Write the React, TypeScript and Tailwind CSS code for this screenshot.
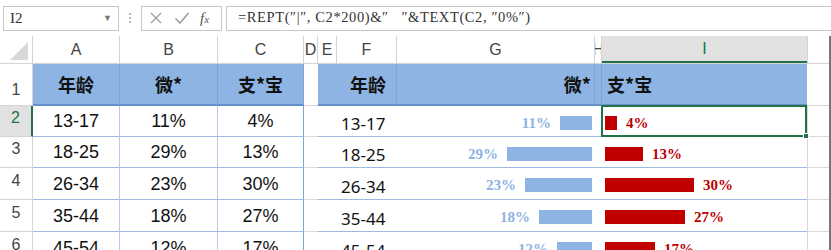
import React from 'react';

const rows = [
    { age: '13-17', w: 11, z: 4, h: 31 },
    { age: '18-25', w: 29, z: 13, h: 31 },
    { age: '26-34', w: 23, z: 30, h: 32 },
    { age: '35-44', w: 18, z: 27, h: 32 },
    { age: '45-54', w: 12, z: 17, h: 32 },
];

const sans = { fontFamily: '"Liberation Sans", Arial, sans-serif' };

const FormulaBar = () => (
    <div className="flex h-[36px] items-center bg-white pl-[3px]">
        <div className="flex h-[25px] w-[116px] items-center justify-between border border-[#c6c6c6] pl-[6px] pr-[6px]">
            <span className="text-[15px] text-[#333] font-['Liberation_Serif',serif]">I2</span>
            <span className="text-[9px] text-[#777]">▼</span>
        </div>
        <div className="flex w-[22px] flex-col items-center gap-[2px]">
            <span className="h-[2px] w-[2px] bg-[#bbb]" />
            <span className="h-[2px] w-[2px] bg-[#bbb]" />
            <span className="h-[2px] w-[2px] bg-[#bbb]" />
        </div>
        <div className="flex h-[25px] w-[81px] items-center border border-[#c6c6c6] pl-[6px]">
            <svg width="14" height="14" viewBox="0 0 14 14" className="ml-[1px]">
                <path d="M2 2 L12 12 M12 2 L2 12" stroke="#a0a0a0" strokeWidth="1.4" />
            </svg>
            <svg width="16" height="14" viewBox="0 0 16 14" className="ml-[11px]">
                <path d="M1.5 7.5 L6 12 L14.5 2" stroke="#a0a0a0" strokeWidth="1.6" fill="none" />
            </svg>
            <span className="ml-[10px] text-[15px] italic text-[#555] font-['Liberation_Serif',serif]">
                f<span className="text-[11px]">x</span>
            </span>
        </div>
        <div className="ml-[4px] flex h-[25px] flex-1 items-center border border-r-0 border-[#c6c6c6] pl-[11px]">
            <span className="text-[14.5px] tracking-[0.6px] text-[#333] font-['Liberation_Serif','Noto_Sans_CJK_SC',serif]">
                =REPT(″|″, C2*200)&amp;″&nbsp;&nbsp;&nbsp;″&amp;TEXT(C2, ″0%″)
            </span>
        </div>
    </div>
);

const colHeads = [
    { l: 'A', w: 87 },
    { l: 'B', w: 98 },
    { l: 'C', w: 86 },
    { l: 'D', w: 14 },
    { l: 'E', w: 19 },
    { l: 'F', w: 60 },
    { l: 'G', w: 198 },
    { l: 'H', w: 7 },
];

const ColumnHeader = () => (
    <div className="flex h-[28px] border-b border-[#d4d4d4] bg-white text-[16px] text-[#444]" style={sans}>
        <div className="relative w-[33px] border-r border-[#d4d4d4]">
            <svg width="20" height="20" viewBox="0 0 20 20" className="absolute bottom-[2px] right-[3px]">
                <path d="M19 1 L19 19 L1 19 Z" fill="#d8d8d8" />
            </svg>
        </div>
        {colHeads.map((c) => (
            <div
                key={c.l}
                className="flex items-center justify-center overflow-hidden border-r border-[#d4d4d4]"
                style={{ width: c.w }}
            >
                {c.l}
            </div>
        ))}
        <div className="flex w-[205px] items-center justify-center border-b-2 border-[#217346] bg-[#e1e1e1] text-[#217346]">
            I
        </div>
        <div className="flex-1 border-l border-[#d4d4d4]" />
    </div>
);

const HeaderRow = () => (
    <div className="flex h-[42px] text-[18px] font-bold text-[#111] font-['Noto_Sans_CJK_SC',sans-serif]">
        <div className="flex w-[33px] items-end justify-center border-r border-b border-[#d4d4d4] pb-[3px] text-[16px] font-normal text-[#444]" style={sans}>
            1
        </div>
        <div className="flex w-[87px] items-center justify-center border-r border-b-2 border-r-[#7ea4d4] border-b-[#6590c9] bg-[#8eb4e3]">年龄</div>
        <div className="flex w-[98px] items-center justify-center border-r border-b-2 border-r-[#7ea4d4] border-b-[#6590c9] bg-[#8eb4e3]">微*</div>
        <div className="flex w-[86px] items-center justify-center border-r border-b-2 border-r-[#7ea4d4] border-b-[#6590c9] bg-[#8eb4e3]">支*宝</div>
        <div className="w-[14px] border-b border-[#d4d4d4]" />
        <div className="flex w-[79px] items-center border-r border-b-2 border-r-[#7ea4d4] border-b-[#6590c9] bg-[#8eb4e3] pl-[32px]">年龄</div>
        <div className="flex w-[198px] items-center justify-end border-r border-b-2 border-r-[#7ea4d4] border-b-[#6590c9] bg-[#8eb4e3] pr-[3px]">微*</div>
        <div className="w-[7px] border-r border-b-2 border-r-[#7ea4d4] border-b-[#6590c9] bg-[#8eb4e3]" />
        <div className="flex w-[205px] items-center border-b-2 border-b-[#6590c9] bg-[#8eb4e3] pl-[5px]">支*宝</div>
        <div className="flex-1 border-b border-[#d4d4d4]" />
    </div>
);

const DataRow = ({ r, n }: { r: (typeof rows)[number]; n: number }) => {
    const sel = n === 2;
    return (
        <div className="flex" style={{ height: r.h }}>
            <div
                className={
                    sel
                        ? 'flex w-[33px] items-end justify-center border-r-2 border-b border-r-[#217346] border-b-[#d4d4d4] bg-[#e1e1e1] pb-[6px] text-[16px] text-[#217346]'
                        : 'flex w-[33px] items-end justify-center border-r border-b border-[#d4d4d4] pb-[6px] text-[16px] text-[#444]'
                }
                style={sans}
            >
                {n}
            </div>
            <div className="flex w-[87px] items-end justify-center border-r border-b border-r-[#b4cbea] border-b-[#9dbbe1] pb-[6px] text-[18px] leading-none text-[#111]" style={sans}>
                {r.age}
            </div>
            <div className="flex w-[98px] items-end justify-center border-r border-b border-r-[#b4cbea] border-b-[#9dbbe1] pb-[6px] text-[18px] leading-none text-[#111]" style={sans}>
                {r.w}%
            </div>
            <div className="flex w-[86px] items-end justify-center border-r border-b border-r-[#7ea4d4] border-b-[#9dbbe1] pb-[6px] text-[18px] leading-none text-[#111]" style={sans}>
                {r.z}%
            </div>
            <div className="w-[14px] border-b border-[#dadada]" />
            <div className="flex w-[79px] items-end border-b border-[#9dbbe1] pb-[4px] pl-[23px] text-[17px] leading-none text-[#111] font-['Noto_Sans',sans-serif]">
                {r.age}
            </div>
            <div className="flex w-[198px] items-start justify-end border-b border-[#9dbbe1] pr-[3px] pt-[10px]">
                <span className="mr-[9px] text-[15px] font-bold leading-[15px] text-[#8eb4e3] font-['Liberation_Serif',serif]">{r.w}%</span>
                <span className="h-[14px] bg-[#8eb4e3]" style={{ width: Math.round(r.w * 2.93) }} />
            </div>
            <div className="w-[7px] border-b border-[#9dbbe1]" />
            <div className="relative flex w-[205px] items-start border-b border-[#9dbbe1] pl-[3px] pt-[10px]">
                <span className="h-[14px] bg-[#c00000]" style={{ width: Math.round(r.z * 2.95) }} />
                <span className="ml-[9px] text-[15px] font-bold leading-[15px] text-[#c00000] font-['Liberation_Serif',serif]">{r.z}%</span>
                {sel && (
                    <div className="absolute -left-px -top-px -bottom-px right-0 border-2 border-[#217346]">
                        <span className="absolute -bottom-[4px] -right-[4px] h-[6px] w-[6px] border border-white bg-[#217346]" />
                    </div>
                )}
            </div>
            <div className="flex-1 border-b border-l border-[#dadada]" />
        </div>
    );
};

const App = () => (
    <div className="relative h-[250px] w-[831px] overflow-hidden bg-white">
        <FormulaBar />
        <ColumnHeader />
        <HeaderRow />
        {rows.map((r, i) => (
            <DataRow key={r.age} r={r} n={i + 2} />
        ))}
        <div className="absolute right-0 top-[36px] bottom-0 w-[2px] bg-[#777]" />
    </div>
);

export default App;
